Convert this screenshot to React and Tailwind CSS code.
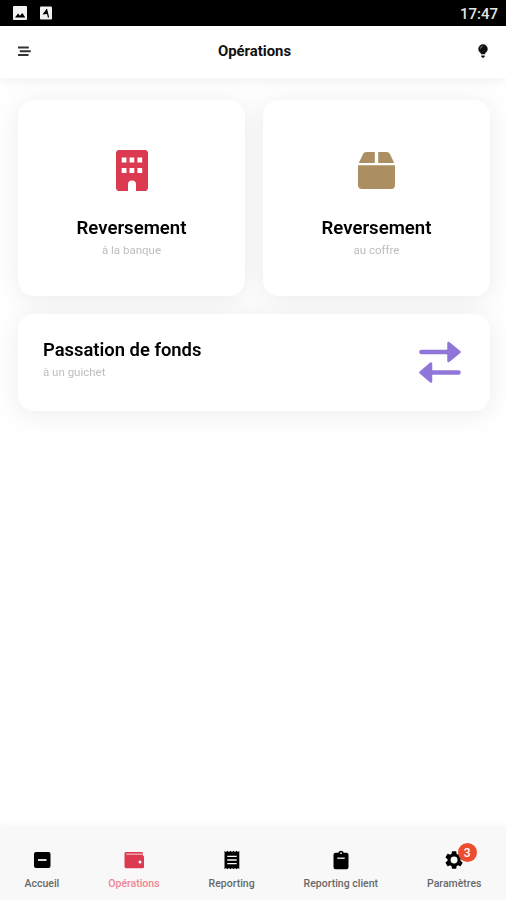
import clsx from 'clsx';

const BuildingIcon = () => (
  <svg width="32" height="41" viewBox="0 0 32 41" fill="#dc3a50">
    <path
      fillRule="evenodd"
      d="M3.500 0h25A3 3 0 0 1 32 3v35a3 3 0 0 1-3.500 3H20v-6.500a4 4 0 0 0-8 0V41H3.500A3 3 0 0 1 0 38v-35A3 3 0 0 1 3.500 0ZM5.700 7.500v5h4.800v-5ZM13.500 7.500v5h4.800v-5ZM21.400 7.500v5h4.800v-5ZM5.700 18v5h4.800v-5ZM13.500 18v5h4.800v-5ZM21.400 18v5h4.800v-5Z"
    />
  </svg>
);

const BoxIcon = () => (
  <svg width="37" height="37" viewBox="0 0 37 38" preserveAspectRatio="none" fill="#ac8e63">
    <path d="M8.500 0h8.300v11.300H.8L5 2.400C5.700.8 6.800 0 8.500 0ZM20.200 0h8.300c1.700 0 2.800.8 3.500 2.400l4.200 8.900H20.200ZM0 13.600h37V34a4 4 0 0 1-4 4H4a4 4 0 0 1-4-4Z" />
  </svg>
);

const TransferIcon = () => (
  <svg width="42" height="43" viewBox="0 0 42 43" fill="#9076d8" stroke="#9076d8" strokeLinecap="round" strokeLinejoin="round">
    <path d="M2.500 11H30M39.500 31.500H12" strokeWidth="4.600" />
    <path d="M29.500 2v18L40.500 11ZM12 22.500v18L1.500 31.500Z" strokeWidth="2.500" />
  </svg>
);

const MenuIcon = () => (
  <svg width="13" height="11" viewBox="0 0 13 11" stroke="#333" strokeWidth="2">
    <path d="M0 1.500h10.800M1.800 5.200h11M0 9h10.500" />
  </svg>
);

const BulbIcon = () => (
  <svg width="10" height="14" viewBox="0 0 10 14" fill="#111">
    <path d="M5 .3A4.700 4.700 0 0 0 .3 5c0 1.800 1 2.900 2 3.700.5.500.7.900.7 1.500h4c0-.6.200-1 .7-1.500 1-.8 2-1.900 2-3.700A4.700 4.700 0 0 0 5 .3Z" />
    <path d="M3.300 11.500h3.400v1L5.700 13.700H4.300l-1-1.200Z" />
    <path d="M2.500 4.600A2.500 2.500 0 0 1 4.700 2.200" fill="none" stroke="#999" strokeWidth=".8" />
  </svg>
);

const HomeIcon = () => (
  <svg width="20" height="20" viewBox="0 0 20 20">
    <rect x="2" y="2" width="16.500" height="16" rx="2" fill="#000" />
    <path d="M6 10h8.500" stroke="#f8f8f8" strokeWidth="1.800" />
  </svg>
);

const WalletIcon = () => (
  <svg width="20" height="20" viewBox="0 0 20 20">
    <path d="M.5 3.500Q.5 2 2 2h15.500q1.300 0 1.300 1.300v2.200q1.200.2 1.200 1.700V17q0 1.200-1.300 1.200H2Q.5 18.200.5 16.500Z" fill="#dc3a50" />
    <path d="M2.200 4.200H18.500" stroke="#f0a4ad" strokeWidth="1.500" />
    <circle cx="16" cy="12" r="1.500" fill="#fff" />
  </svg>
);

const ReceiptIcon = () => (
  <svg width="20" height="20" viewBox="0 0 20 20">
    <path d="M2.500 .8 4 2 5.500.8 7 2 8.500.8 10 2 11.500.8 13 2 14.500.8 16 2 17.300.8V19.200L16 18l-1.500 1.200L13 18l-1.500 1.200L10 18l-1.500 1.200L7 18l-1.500 1.200L4 18 2.500 19.200Z" fill="#000" />
    <path d="M5.300 6.300h9.400M5.300 10h9.400M5.300 13.700h9.400" stroke="#f8f8f8" strokeWidth="1.300" />
  </svg>
);

const ClipboardIcon = () => (
  <svg width="20" height="20" viewBox="0 0 20 20">
    <path d="M4.500 2.700h2.800a2.800 2.800 0 0 1 5.400 0h2.800q2 0 2 2v12.600q0 2-2 2h-11q-2 0-2-2V4.700q0-2 2-2Z" fill="#000" />
    <circle cx="10" cy="3.200" r=".9" fill="#f8f8f8" />
    <path d="M6.300 8.200h7.400" stroke="#f8f8f8" strokeWidth="1.300" />
  </svg>
);

const GearIcon = () => (
  <svg width="21" height="20" viewBox="1 .5 23 23">
    <path
      fillRule="evenodd"
      d="M19.400 13c.1-.3.100-.7.100-1s0-.7-.1-1l2.200-1.700c.2-.2.300-.5.100-.7l-2-3.500c-.1-.2-.4-.3-.6-.2l-2.500 1c-.5-.4-1.100-.7-1.700-1l-.4-2.700c0-.2-.2-.4-.5-.4h-4c-.3 0-.5.200-.5.400l-.4 2.700c-.6.300-1.200.6-1.700 1l-2.500-1c-.2-.1-.5 0-.6.200l-2 3.500c-.1.200-.1.500.1.700L4.600 11c-.1.300-.1.700-.1 1s0 .7.100 1l-2.200 1.700c-.2.200-.2.500-.1.700l2 3.500c.1.200.4.300.6.200l2.500-1c.5.400 1.100.7 1.700 1l.4 2.700c0 .2.200.4.500.4h4c.3 0 .5-.2.500-.4l.4-2.700c.6-.3 1.200-.6 1.700-1l2.500 1c.2.100.5 0 .6-.2l2-3.500c.1-.2.100-.5-.1-.7ZM12 16a4 4 0 1 1 0-8 4 4 0 0 1 0 8Z"
    />
  </svg>
);

const tabs = [
  { label: 'Accueil', icon: HomeIcon },
  { label: 'Opérations', icon: WalletIcon, active: true },
  { label: 'Reporting', icon: ReceiptIcon },
  { label: 'Reporting client', icon: ClipboardIcon },
  { label: 'Paramètres', icon: GearIcon, badge: 3 },
];

function StatusBar() {
  return (
    <div className="flex h-[26px] shrink-0 items-center justify-between bg-black pr-2 pl-[13px]">
      <div className="flex gap-[13px]">
        <svg width="14" height="14" viewBox="0 0 14 14">
          <rect width="14" height="14" rx="1" fill="#f2f2f2" />
          <path d="M2 11.500 5 7.500l2 2.300L9.300 7l3 4.500Z" />
        </svg>
        <svg width="12" height="14" viewBox="0 0 12 14">
          <rect y=".5" width="12" height="13" rx="1" fill="#f2f2f2" />
          <path d="M2.500 8.500 6.500 3 7.200 8Z" />
          <path d="M6.500 3 8.500 11.500" stroke="#000" strokeWidth="1.200" />
        </svg>
      </div>
      <span className="pt-0.5 text-[15px] font-medium text-[#e5e5e5]">17:47</span>
    </div>
  );
}

function OperationCard({ icon, title, subtitle }) {
  return (
    <div className="flex h-[196px] flex-1 flex-col items-center rounded-2xl bg-white pt-[50px]">
      <div className="flex h-10 items-center">{icon}</div>
      <h2 className="mt-[26px] text-[18.600px] leading-6 font-semibold text-black">{title}</h2>
      <p className="mt-0.5 text-[11.500px] leading-4 text-[#bdbdbd]">{subtitle}</p>
    </div>
  );
}

function TabBar() {
  return (
    <nav className="flex h-[72px] shrink-0 justify-around bg-[#f8f8f8] pt-[22px] shadow-[0_0_10px_rgba(0,0,0,0.07)]">
      {tabs.map(({ label, icon: Icon, active, badge }) => (
        <div key={label} className="flex flex-col items-center">
          <div className="relative">
            <Icon />
            {badge && (
              <span className="absolute -top-[7px] left-[14px] flex size-[19px] items-center justify-center rounded-full bg-[#ec4d2c] text-[12px] font-medium text-white">
                {badge}
              </span>
            )}
          </div>
          <span className={clsx('mt-[6px] text-[10.500px] leading-4 font-medium', active ? 'text-[#ec8591]' : 'text-[#686868]')}>
            {label}
          </span>
        </div>
      ))}
    </nav>
  );
}

export default function App() {
  return (
    <div className="flex h-[900px] w-[506px] flex-col overflow-hidden bg-white font-[Roboto,sans-serif]">
      <StatusBar />
      <header className="z-10 flex h-[52px] shrink-0 items-center justify-between bg-white px-[18px] pb-[2px] shadow-[0_0_14px_rgba(0,0,0,0.09)]">
        <MenuIcon />
        <h1 className="text-[14.900px] font-bold text-[#111]">Opérations</h1>
        <BulbIcon />
      </header>

      {/* one shadow for the whole group, so cards don't darken each other */}
      <main className="flex flex-1 flex-col gap-[18px] pt-[22px] pr-4 pl-[18px] drop-shadow-[0_3px_13px_rgba(0,0,0,0.08)]">
        <div className="flex gap-[18px]">
          <OperationCard icon={<BuildingIcon />} title="Reversement" subtitle="à la banque" />
          <OperationCard icon={<BoxIcon />} title="Reversement" subtitle="au coffre" />
        </div>
        <div className="flex h-[97px] justify-between rounded-2xl bg-white pr-[29px] pl-[25px]">
          <div className="pt-6">
            <h2 className="text-[18.400px] leading-6 font-semibold text-black">Passation de fonds</h2>
            <p className="mt-0.5 text-[11.500px] leading-4 text-[#bdbdbd]">à un guichet</p>
          </div>
          <div className="pt-[27px]">
            <TransferIcon />
          </div>
        </div>
      </main>

      <TabBar />
    </div>
  );
}
